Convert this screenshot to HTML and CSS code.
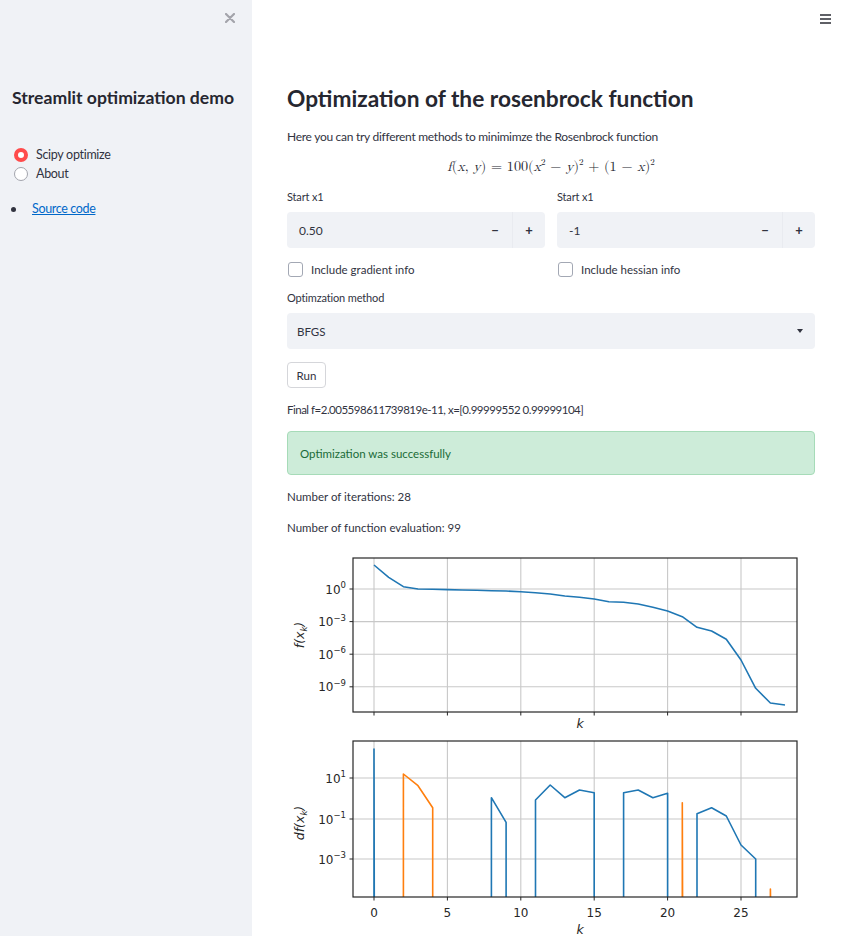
FILE: index.html
```html
<!DOCTYPE html>
<html>
<head>
<meta charset="utf-8">
<link rel="stylesheet" href="styles.css">
</head>
<body>
<div class="app">
  <aside class="sidebar">
    <div class="close-row"><svg class="close" width="10" height="10" viewBox="0 0 10 10"><path d="M1 1L9 9M9 1L1 9"/></svg></div>
    <h2 class="side-title">Streamlit optimization demo</h2>
    <div class="radios">
      <div class="radio-row"><span class="radio on"></span><span>Scipy optimize</span></div>
      <div class="radio-row"><span class="radio"></span><span>About</span></div>
    </div>
    <ul class="links"><li><a href="#">Source code</a></li></ul>
  </aside>
  <main class="main">
    <div class="topbar"><span class="burger"><i></i><i></i><i></i></span></div>
    <div class="content">
      <h1 class="title">Optimization of the rosenbrock function</h1>
      <p class="para">Here you can try different methods to minimimze the Rosenbrock function</p>
      <div class="formula"><i>f</i>(<i>x</i>, <i>y</i>) = 100(<i>x</i><sup>2</sup> − <i>y</i>)<sup>2</sup> + (1 − <i>x</i>)<sup>2</sup></div>
      <div class="cols">
        <div class="col">
          <div class="label">Start x1</div>
          <div class="numinput"><span class="val">0.50</span><span class="step">−</span><span class="step plus">+</span></div>
          <div class="check"><span class="box"></span><span>Include gradient info</span></div>
        </div>
        <div class="col">
          <div class="label">Start x1</div>
          <div class="numinput"><span class="val">-1</span><span class="step">−</span><span class="step plus">+</span></div>
          <div class="check"><span class="box"></span><span>Include hessian info</span></div>
        </div>
      </div>
      <div class="label method">Optimzation method</div>
      <div class="select"><span>BFGS</span><span class="caret"></span></div>
      <button class="run">Run</button>
      <p class="txt final">Final f=2.005598611739819e-11, x=[0.99999552 0.99999104]</p>
      <div class="success">Optimization was successfully</div>
      <p class="txt iter">Number of iterations: 28</p>
      <p class="txt feval">Number of function evaluation: 99</p>
      <svg class="chart" width="528" height="400" viewBox="0 0 528 400" xmlns="http://www.w3.org/2000/svg">
        <defs>
          <clipPath id="c1"><rect x="66" y="8" width="444" height="154"/></clipPath>
          <clipPath id="c2"><rect x="66" y="191" width="444" height="156"/></clipPath>
        </defs>
        <!-- top axes -->
        <g class="grid">
          <line x1="87" y1="8" x2="87" y2="162"/><line x1="160.4" y1="8" x2="160.4" y2="162"/>
          <line x1="233.8" y1="8" x2="233.8" y2="162"/><line x1="307.2" y1="8" x2="307.2" y2="162"/>
          <line x1="380.6" y1="8" x2="380.6" y2="162"/><line x1="454" y1="8" x2="454" y2="162"/>
          <line x1="66" y1="39" x2="510" y2="39"/><line x1="66" y1="71.6" x2="510" y2="71.6"/>
          <line x1="66" y1="104.2" x2="510" y2="104.2"/><line x1="66" y1="136.8" x2="510" y2="136.8"/>
        </g>
        <polyline class="l-blue" clip-path="url(#c1)" points="87,15 101.7,27.3 116.4,36.7 131,39 145.7,39.3 160.4,39.6 175.1,40 189.8,40.3 204.4,40.7 219.1,41 233.8,41.7 248.5,42.7 263.2,44 277.8,46 292.5,47.3 307.2,49 321.9,51.7 336.6,52.3 351.2,54 365.9,57.3 380.6,61 395.3,66.7 410,77.3 424.6,81 439.3,89.3 454,110 468.7,138.3 483.4,153 498.0,155"/>
        <rect class="frame" x="66" y="8" width="444" height="154"/>
        <g class="ticks">
          <line x1="87" y1="162" x2="87" y2="165.5"/><line x1="160.4" y1="162" x2="160.4" y2="165.5"/>
          <line x1="233.8" y1="162" x2="233.8" y2="165.5"/><line x1="307.2" y1="162" x2="307.2" y2="165.5"/>
          <line x1="380.6" y1="162" x2="380.6" y2="165.5"/><line x1="454" y1="162" x2="454" y2="165.5"/>
          <line x1="62.5" y1="39" x2="66" y2="39"/><line x1="62.5" y1="71.6" x2="66" y2="71.6"/>
          <line x1="62.5" y1="104.2" x2="66" y2="104.2"/><line x1="62.5" y1="136.8" x2="66" y2="136.8"/>
        </g>
        <g class="tl" text-anchor="end">
          <text x="59" y="43.5">10<tspan class="exp" dy="-5.5">0</tspan></text>
          <text x="59" y="76">10<tspan class="exp" dy="-5.5">−3</tspan></text>
          <text x="59" y="108.7">10<tspan class="exp" dy="-5.5">−6</tspan></text>
          <text x="59" y="141.3">10<tspan class="exp" dy="-5.5">−9</tspan></text>
        </g>
        <text class="axl" x="293" y="178" text-anchor="middle">k</text>
        <text class="axl" transform="translate(17 85) rotate(-90)" text-anchor="middle">f(x<tspan class="sub" dy="3">k</tspan><tspan dy="-3">)</tspan></text>

        <!-- bottom axes -->
        <g class="grid">
          <line x1="87" y1="191" x2="87" y2="347"/><line x1="160.4" y1="191" x2="160.4" y2="347"/>
          <line x1="233.8" y1="191" x2="233.8" y2="347"/><line x1="307.2" y1="191" x2="307.2" y2="347"/>
          <line x1="380.6" y1="191" x2="380.6" y2="347"/><line x1="454" y1="191" x2="454" y2="347"/>
          <line x1="66" y1="228" x2="510" y2="228"/><line x1="66" y1="269" x2="510" y2="269"/>
          <line x1="66" y1="309" x2="510" y2="309"/>
        </g>
        <g clip-path="url(#c2)">
          <polyline class="l-blue" points="87,360 87,199 87.3,360"/>
          <polyline class="l-blue" points="204.4,360 204.4,247.7 219.1,272.3 219.1,360"/>
          <polyline class="l-blue" points="248.5,360 248.5,250 263.2,235 277.8,247.7 292.5,240 307.2,242.7 307.2,360"/>
          <polyline class="l-blue" points="336.6,360 336.6,242.7 351.2,240 365.9,247.7 380.6,243.3 380.6,360"/>
          <polyline class="l-blue" points="410,360 410,263.7 424.6,257.7 439.3,266 454,295 468.7,309 468.7,360"/>
          <polyline class="l-orange" points="116.4,360 116.4,224 131,235.7 145.7,257.7 145.7,360"/>
          <polyline class="l-orange" points="395.3,360 395.3,252.7 395.6,360"/>
          <polyline class="l-orange" points="483.4,360 483.4,339 483.7,360"/>
        </g>
        <rect class="frame" x="66" y="191" width="444" height="156"/>
        <g class="ticks">
          <line x1="87" y1="347" x2="87" y2="350.5"/><line x1="160.4" y1="347" x2="160.4" y2="350.5"/>
          <line x1="233.8" y1="347" x2="233.8" y2="350.5"/><line x1="307.2" y1="347" x2="307.2" y2="350.5"/>
          <line x1="380.6" y1="347" x2="380.6" y2="350.5"/><line x1="454" y1="347" x2="454" y2="350.5"/>
          <line x1="62.5" y1="228" x2="66" y2="228"/><line x1="62.5" y1="269" x2="66" y2="269"/>
          <line x1="62.5" y1="309" x2="66" y2="309"/>
        </g>
        <g class="tl" text-anchor="end">
          <text x="59" y="232.5">10<tspan class="exp" dy="-5.5">1</tspan></text>
          <text x="59" y="273.5">10<tspan class="exp" dy="-5.5">−1</tspan></text>
          <text x="59" y="313.5">10<tspan class="exp" dy="-5.5">−3</tspan></text>
        </g>
        <g class="tl" text-anchor="middle">
          <text x="87" y="366.5">0</text><text x="160.4" y="366.5">5</text><text x="233.8" y="366.5">10</text>
          <text x="307.2" y="366.5">15</text><text x="380.6" y="366.5">20</text><text x="454" y="366.5">25</text>
        </g>
        <text class="axl" x="293" y="384" text-anchor="middle">k</text>
        <text class="axl" transform="translate(17 273) rotate(-90)" text-anchor="middle">df(x<tspan class="sub" dy="3">k</tspan><tspan dy="-3">)</tspan></text>
      </svg>
    </div>
  </main>
</div>
</body>
</html>
```
FILE: styles.css
```css
* { box-sizing: border-box; }
html, body { margin: 0; padding: 0; }
body {
  font-family: "Source Sans Pro", Lato, "Noto Sans", sans-serif;
  color: #31333f;
  background: #ffffff;
  width: 848px;
  height: 936px;
  overflow: hidden;
}
.app { display: flex; height: 936px; }
.sidebar {
  width: 252px;
  flex: none;
  background: #f0f2f6;
  padding: 0 12px;
}
.close-row { display: flex; justify-content: flex-end; height: 36px; align-items: center; padding-right: 5px; }
.close { display: block; }
.close path { stroke: #a3a4ab; stroke-width: 2.2; stroke-linecap: round; fill: none; }
.side-title {
  margin: 50px 0 0 0;
  font-size: 17.6px;
  font-weight: 700;
  line-height: 24px;
  color: #262730;
}
.radios { margin-top: 35px; }
.radio-row { display: flex; align-items: center; height: 19px; font-size: 12.5px; letter-spacing: -0.3px; gap: 8px; padding-left: 2px; }
.radio {
  width: 14px; height: 14px; border-radius: 50%;
  border: 1px solid #a3a5ad; background: #fff; flex: none;
}
.radio.on { border: 4.5px solid #ff4b4b; background: #fff; }
.links { margin: 17px 0 0 0; padding: 0; list-style: none; font-size: 12.5px; line-height: 18px; letter-spacing: -0.35px; }
.links li { display: flex; align-items: center; }
.links li::before { content: ""; width: 5px; height: 5px; border-radius: 50%; background: #31333f; margin: 0 16px 0 -1px; flex: none; }
.links a { color: #0068c9; }
.main { flex: 1; position: relative; }
.topbar { position: absolute; top: 0; right: 0; width: 60px; height: 40px; }
.burger { position: absolute; right: 17px; top: 14px; width: 11px; display: flex; flex-direction: column; gap: 2.5px; }
.burger i { display: block; height: 1.5px; background: #5f6066; }
.content { width: 528px; margin-left: 35px; padding-top: 84px; }
.title {
  margin: 0; font-size: 22.7px; line-height: 30px; font-weight: 700; color: #262730;
}
.para { margin: 14px 0 0 0; font-size: 12px; letter-spacing: -0.28px; line-height: 18px; }
.formula {
  margin-top: 10px; height: 22px; line-height: 22px; text-align: center;
  font-family: "Latin Modern Math", "DejaVu Serif", "Liberation Serif", serif; font-size: 14.2px; color: #262730;
}
.formula sup { font-size: 9px; line-height: 0; vertical-align: 6px; }
.cols { margin-top: 10px; display: grid; grid-template-columns: 1fr 1fr; gap: 12px; }
.label { font-size: 11px; line-height: 18px; height: 18px; letter-spacing: -0.15px; }
.numinput {
  margin-top: 6px; height: 36px; background: #f0f2f6; border-radius: 4px;
  display: flex; align-items: center; font-size: 12px;
}
.numinput .val { flex: 1; padding-left: 12px; }
.step { width: 34px; height: 100%; display: flex; align-items: center; justify-content: center; font-weight: 700; font-size: 13px; color: #31333f; }
.step.plus { border-left: 1px solid #e9ebf0; width: 33px; }
.check { margin-top: 12px; height: 18px; display: flex; align-items: center; gap: 8px; font-size: 11.5px; padding-left: 1px; }
.box { width: 15px; height: 15px; border: 1px solid #a3a8b4; border-radius: 3px; background: #fff; }
.method { margin-top: 11px; }
.select {
  margin-top: 6px; height: 36px; background: #f0f2f6; border-radius: 4px;
  display: flex; align-items: center; justify-content: space-between;
  padding: 0 12px 0 10px; font-size: 11.5px;
}
.caret { width: 0; height: 0; border-left: 3.5px solid transparent; border-right: 3.5px solid transparent; border-top: 4px solid #31333f; }
.run {
  display: block; margin-top: 13px; height: 26px; width: 39px; padding: 0;
  background: #fff; border: 1px solid #d5d6da; border-radius: 4px;
  font-family: inherit; font-size: 11.5px; color: #31333f;
}
.txt { margin: 13px 0 0 0; font-size: 11.5px; line-height: 18px; }
.txt.final { letter-spacing: -0.5px; }
.success {
  margin-top: 12px; height: 44px; background: #cdecd9; border: 1px solid #a6dbb8; border-radius: 4px;
  display: flex; align-items: center; padding-left: 12px; font-size: 11.5px; color: #1a6b37;
}
.chart { display: block; margin-top: 13px; }
.grid line { stroke: #c8c8c8; stroke-width: 1.1; }
.frame { fill: none; stroke: #262626; stroke-width: 1.2; }
.ticks line { stroke: #262626; stroke-width: 1; }
.tl text { font-family: "DejaVu Sans", sans-serif; font-size: 12px; fill: #262626; }
.tl .exp { font-size: 8.5px; }
.axl { font-family: "DejaVu Sans", sans-serif; font-style: oblique; font-size: 12.5px; fill: #262626; }
.axl .sub { font-size: 8.5px; }
.l-blue { fill: none; stroke: #1f77b4; stroke-width: 1.6; stroke-linejoin: round; }
.l-orange { fill: none; stroke: #ff7f0e; stroke-width: 1.6; stroke-linejoin: round; }
```
